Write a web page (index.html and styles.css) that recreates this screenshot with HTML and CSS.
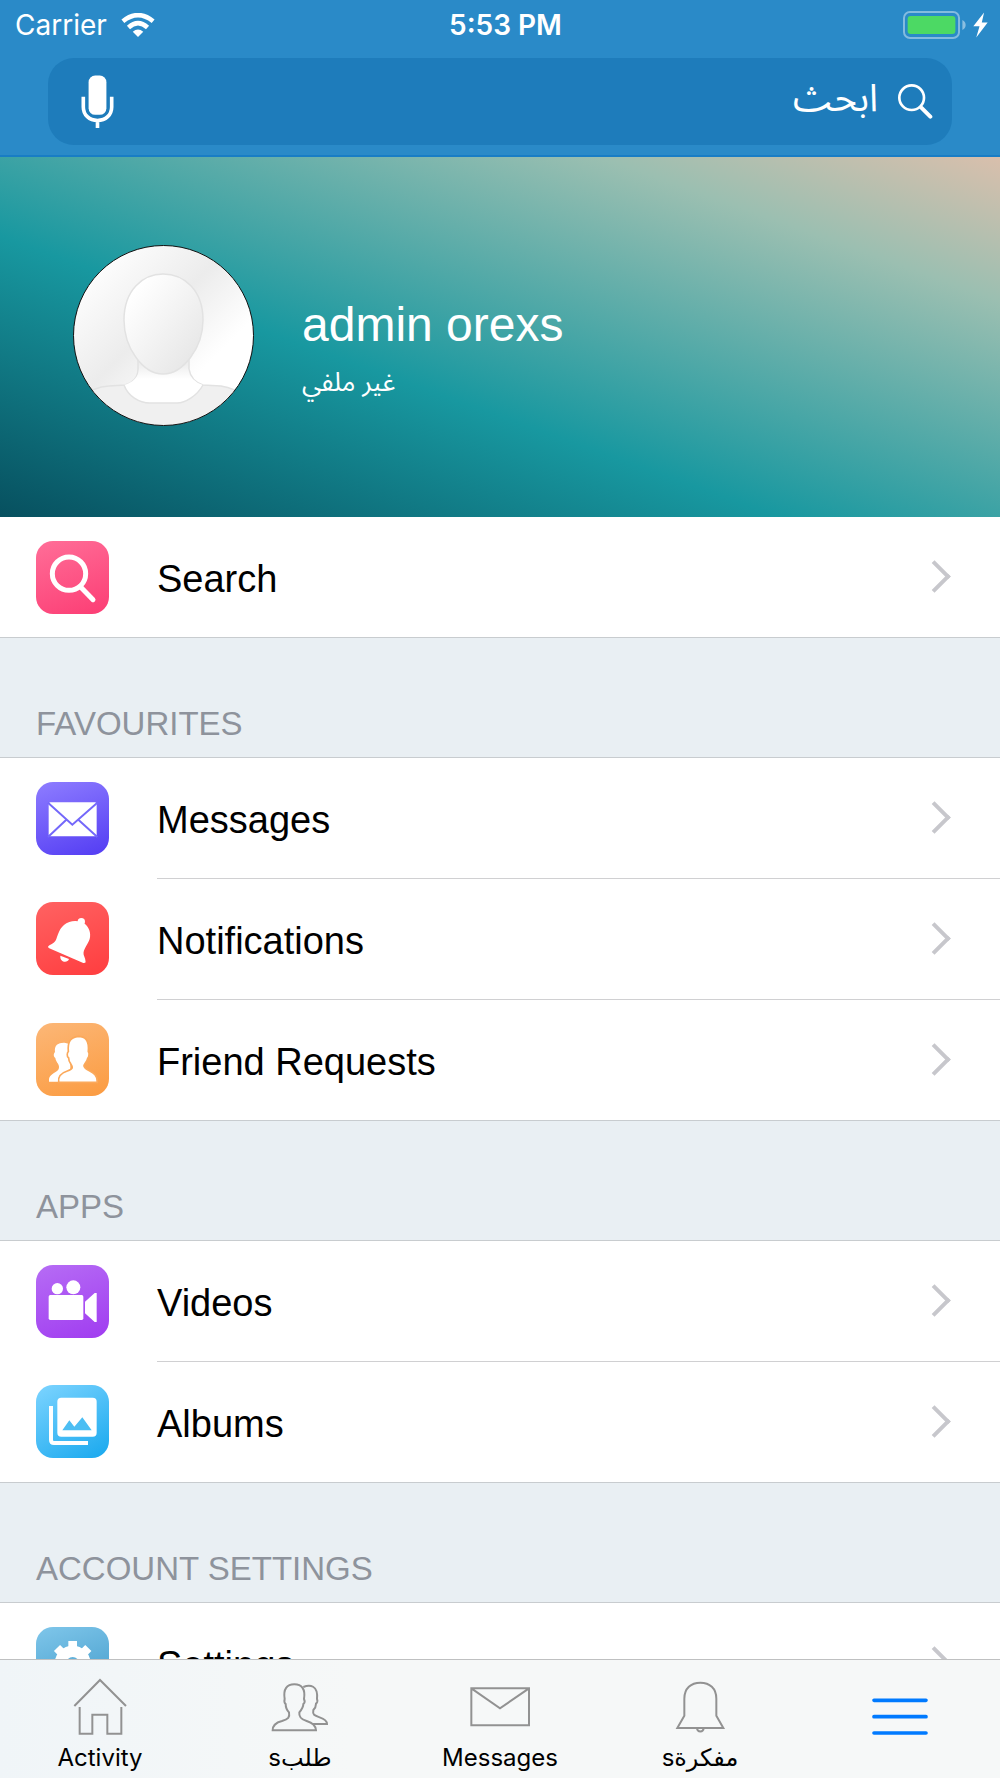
FILE: index.html
```html
<!DOCTYPE html>
<html lang="en">
<head>
    <meta charset="UTF-8">
    <meta name="viewport" content="width=device-width, initial-scale=1.0">
    <title>Menu</title>
    <link rel="stylesheet" href="styles.css">
</head>
<body>
    <div class="app">
        <header class="header">
            <div class="status">
                <div class="carrier">
                    <span>Carrier</span>
                    <svg class="wifi" viewBox="0 0 102 73">
                        <path fill="#fff" d="M51 73L35 57Q51 43 67 57Z"/>
                        <path fill="none" stroke="#fff" stroke-width="14" d="M22 44Q51 18 80 44M5 25Q51 -12 97 25"/>
                    </svg>
                </div>
                <span class="time">5:53 PM</span>
                <div class="power">
                    <svg class="battery" viewBox="0 0 190 84">
                        <rect x="3" y="3" width="166" height="78" rx="18" fill="none" stroke="#fff" stroke-opacity=".42" stroke-width="6"/>
                        <rect x="14" y="15" width="144" height="54" rx="9" fill="#4cd964"/>
                        <path fill="#fff" fill-opacity=".45" d="M179 27Q189 32 189 42T179 57Z"/>
                    </svg>
                    <svg class="bolt" viewBox="0 0 46 78">
                        <path fill="#fff" d="M34 1L1 43H20L10 77L45 31H27Z"/>
                    </svg>
                </div>
            </div>
            <form class="search" dir="rtl">
                <svg class="search-icon" viewBox="0 0 105 105">
                    <circle cx="41" cy="41" r="37" fill="none" stroke="#fff" stroke-width="8"/>
                    <path fill="none" stroke="#fff" stroke-width="12" stroke-linecap="round" d="M70 71L97 98"/>
                </svg>
                <input class="search-input" type="text" placeholder="ابحث" aria-label="ابحث">
                <button class="mic" type="button" aria-label="Voice search">
                    <svg viewBox="0 0 100 162">
                        <rect x="23" y="1" width="54" height="119" rx="20" fill="#fff"/>
                        <path fill="none" stroke="#fff" stroke-width="11" d="M7 65V96C7 120 25 137 50 137S93 120 93 96V65M50 137V160"/>
                    </svg>
                </button>
            </form>
        </header>

        <main class="content">
            <a class="profile" href="#">
                <svg class="avatar" viewBox="0 0 181 181">
                    <defs>
                        <clipPath id="round"><circle cx="90.500" cy="90.500" r="90"/></clipPath>
                        <linearGradient id="back" x1="0" y1="0" x2="1" y2="1">
                            <stop offset="0.100" stop-color="#fff"/>
                            <stop offset="0.440" stop-color="#ececec"/>
                            <stop offset="0.700" stop-color="#fff"/>
                        </linearGradient>
                        <linearGradient id="face" x1="0" y1="0" x2="1" y2="1">
                            <stop offset="0.150" stop-color="#fff"/>
                            <stop offset="0.900" stop-color="#e6e6e6"/>
                        </linearGradient>
                        <linearGradient id="neck" x1="0" y1="0" x2="0" y2="1">
                            <stop offset="0.200" stop-color="#eee"/>
                            <stop offset="0.500" stop-color="#fff"/>
                        </linearGradient>
                    </defs>
                    <g clip-path="url(#round)" stroke="#e2e2e2" stroke-width="1.500">
                        <rect width="181" height="181" fill="url(#back)" stroke="none"/>
                        <path fill="#f0f0f0" d="M10 190V152Q20 142 36 141L52 140Q65 136 65 124V100H116V124Q118 136 130 140L148 141Q162 143 172 152V190Z"/>
                        <path fill="url(#neck)" stroke="none" d="M66 110H115V124Q117 136 130 140C124 151 112 158 104 158H77C66 158 55 151 51 140Q65 136 66 124Z"/>
                        <path fill="none" d="M51 140C55 151 66 158 77 158H104C112 158 124 151 130 140"/>
                        <path fill="url(#face)" d="M90 29C70 29 51 45 51 75C51 103 70 129 90 129S130 103 130 75C130 45 111 29 90 29Z"/>
                    </g>
                    <circle cx="90.500" cy="90.500" r="90" fill="none" stroke="#111"/>
                </svg>
                <div class="profile-text">
                    <h1 class="name">admin orexs</h1>
                    <p class="edit" dir="rtl">غير ملفي</p>
                </div>
            </a>

            <nav class="menu">
                <a class="row" href="#">
                    <svg class="icon pink" viewBox="0 0 219 219">
                        <circle cx="99" cy="98" r="50" fill="none" stroke="#fff" stroke-width="15"/>
                        <path fill="none" stroke="#fff" stroke-width="15" stroke-linecap="round" d="M134 138L171 176"/>
                    </svg>
                    <span class="label">Search</span>
                </a>

                <h2 class="section">FAVOURITES</h2>
                <a class="row" href="#">
                    <svg class="icon violet" viewBox="0 0 219 219">
                        <rect x="38" y="61" width="144" height="102" rx="5" fill="#fff"/>
                        <path fill="none" stroke="#7468fa" stroke-width="6" d="M36 62L109 128L184 62M36 165L91 113M184 165L127 113"/>
                    </svg>
                    <span class="label">Messages</span>
                </a>
                <a class="row" href="#">
                    <svg class="icon red" viewBox="0 0 219 219">
                        <circle cx="136" cy="59" r="11" fill="#fff"/>
                        <path fill="#fff" d="M36 134C42 126 55 126 61 111C68 91 74 69 100 60Q112 56 127 58L147 66C158 75 166 92 161 111C156 127 140 143 143 158Q149 172 149 181Q145 185 140 182L38 138ZM73 161L99 171C95 184 71 182 73 161Z"/>
                    </svg>
                    <span class="label">Notifications</span>
                </a>
                <a class="row" href="#">
                    <svg class="icon orange" viewBox="0 0 219 219">
                        <path fill="#fff" d="M39 176V168C41 153 64 148 68 138C73 125 60 119 58 105C51 100 53 90 57 88C54 65 67 60 83 59Q94 58 103 67V176Z"/>
                        <path fill="#fff" stroke="#fba95b" stroke-width="5" d="M68 178C65 160 75 150 94 144C113 138 111 132 104 122Q98 115 98 105C91 100 94 88 97 86C94 55 105 42 127 40C146 40 160 49 157 86C161 90 159 102 155 106C153 117 143 123 144 129C148 147 186 142 184 178Z"/>
                    </svg>
                    <span class="label">Friend Requests</span>
                </a>

                <h2 class="section">APPS</h2>
                <a class="row" href="#">
                    <svg class="icon purple" viewBox="0 0 219 219">
                        <g fill="#fff">
                            <circle cx="64" cy="71" r="17"/>
                            <circle cx="112" cy="67" r="21"/>
                            <rect x="38" y="90" width="104" height="75" rx="5"/>
                            <path d="M147 110L176 84H182V171H176L147 145Z"/>
                        </g>
                    </svg>
                    <span class="label">Videos</span>
                </a>
                <a class="row" href="#">
                    <svg class="icon sky" viewBox="0 0 219 219">
                        <rect x="64" y="38" width="118" height="117" rx="12" fill="#fff"/>
                        <path fill="#4cbef3" d="M79 136L100 106L115 125L139 97L167 136Z"/>
                        <path fill="none" stroke="#fff" stroke-width="12" d="M45 63V165Q45 174 54 174H156"/>
                    </svg>
                    <span class="label">Albums</span>
                </a>

                <h2 class="section">ACCOUNT SETTINGS</h2>
                <a class="row" href="#">
                    <svg class="icon steel" viewBox="0 0 219 219">
                        <g fill="none" stroke="#fff">
                            <circle cx="110" cy="110" r="37" stroke-width="34"/>
                            <path stroke-width="26" d="M110 42V70M110 150V178M42 110H70M150 110H178M63 63L82 82M138 138L157 157M63 157L82 138M138 82L157 63"/>
                        </g>
                    </svg>
                    <span class="label">Settings</span>
                </a>
            </nav>
        </main>

        <nav class="tabs">
            <a class="tab" href="#">
                <svg viewBox="0 0 180 180"><path d="M13 87L90 9L168 87M29 90V170H67V113H112V170H154V90"/></svg>
                <span>Activity</span>
            </a>
            <a class="tab" href="#">
                <svg viewBox="0 0 180 180">
                    <path d="M8 160C8 144 20 136 36 132C55 126 60 121 57 106C50 99 47 92 47 81C41 76 43 70 44 66C39 35 51 22 73 22S107 35 102 66C105 72 104 78 100 81C100 92 94 99 88 106C86 121 94 127 110 132C127 137 137 144 138 160Z"/>
                    <path d="M100 30C119 22 145 24 141 66C144 72 141 78 138 80Q138 91 130 99C127 113 133 116 149 121Q171 128 171 141H128"/>
                </svg>
                <span dir="ltr">s<bdi>طلب</bdi></span>
            </a>
            <a class="tab" href="#">
                <svg viewBox="0 0 180 180"><path d="M4 34H177V145H4ZL90 94L177 34"/></svg>
                <span>Messages</span>
            </a>
            <a class="tab" href="#">
                <svg viewBox="0 0 180 180"><path d="M22 153L43 116V65C43 34 63 17 91 17S139 34 139 65V116L160 153ZM81 153C82 167 100 167 101 153"/></svg>
                <span dir="ltr">s<bdi>مفكرة</bdi></span>
            </a>
            <a class="tab active" href="#" aria-label="Menu">
                <svg viewBox="0 0 180 180"><path d="M12 70H168M12 119H168M12 168H168"/></svg>
            </a>
        </nav>
    </div>
</body>
</html>
```
FILE: styles.css
```css
* {
    box-sizing: border-box;
}
body {
    margin: 0;
    font-family: "Liberation Sans", Arial, sans-serif;
    color: #000;
    background-color: #fff;
}
svg {
    display: block;
    flex-shrink: 0;
}
a {
    color: inherit;
    text-decoration: none;
}
.app {
    display: flex;
    flex-direction: column;
    height: 100vh;
}

/* header */
.header {
    background-color: #2a8ac8;
    border-bottom: 2px solid #187dc5;
    padding-bottom: 10px;
}
.status {
    display: grid;
    grid-template-columns: 1fr auto 1fr;
    align-items: center;
    height: 50px;
    padding: 0 4px 0 15px;
    color: #fff;
    font-family: Inter, Roboto, sans-serif;
    font-size: 28px;
}
.carrier {
    display: flex;
    align-items: center;
    gap: 14px;
}
.wifi {
    width: 34px;
    height: 24px;
}
.time {
    font-weight: 600;
}
.power {
    display: flex;
    justify-content: flex-end;
    align-items: center;
    gap: 7px;
    padding-right: 8px;
}
.battery {
    width: 63px;
    height: 28px;
}
.bolt {
    width: 15px;
    height: 26px;
}
.search {
    display: flex;
    align-items: center;
    gap: 20px;
    height: 87px;
    margin: 8px 48px 0;
    padding: 0 19px 0 33px;
    border-radius: 26px;
    background-color: #1e7cbb;
}
.search-icon {
    width: 35px;
    height: 35px;
}
.search-input {
    flex: 1;
    min-width: 0;
    padding: 0 0 6px;
    border: 0;
    outline: 0;
    background: none;
    color: #fff;
    font-family: "Noto Sans Arabic", "DejaVu Sans", sans-serif;
    font-size: 38px;
}
.search-input::placeholder {
    color: #fff;
    opacity: 1;
}
.mic {
    padding: 0;
    border: 0;
    background: none;
}
.mic svg {
    width: 33px;
    height: 54px;
}

/* profile */
.content {
    flex: 1;
    min-height: 0;
    overflow-y: auto;
    scrollbar-width: none;
}
.profile {
    display: flex;
    align-items: center;
    gap: 48px;
    padding: 88px 73px 91px;
    color: #fff;
    background: linear-gradient(to top right, #07505f 0%, #1898a0 39%, #9bbfb1 80%, #d9bfac 100%);
}
.avatar {
    width: 181px;
    height: 181px;
}
.profile-text {
    padding-top: 26px;
}
.name {
    margin: 0;
    font-size: 48px;
    font-weight: normal;
    line-height: 56px;
}
.edit {
    margin: 12px 0 0;
    font-family: "Noto Sans Arabic", "DejaVu Sans", sans-serif;
    font-size: 26px;
    line-height: 36px;
    text-align: left;
}

/* list */
.row {
    display: flex;
    align-items: center;
    gap: 48px;
    height: 120px;
    padding-left: 36px;
}
.row + .row {
    height: 121px;
}
.icon {
    width: 73px;
    height: 73px;
    border-radius: 17px;
}
.pink { background: linear-gradient(160deg, #ff6e98, #fc3d74); }
.violet { background: linear-gradient(160deg, #8e7dff, #533cf3); }
.red { background: linear-gradient(160deg, #ff6262, #ff3d3f); }
.orange { background: linear-gradient(160deg, #fcb777, #fb9b40); }
.purple { background: linear-gradient(160deg, #b66cf5, #a03cf0); }
.sky { background: linear-gradient(150deg, #7dd4ff, #18a8ee); }
.steel { background: linear-gradient(160deg, #7fc6ea, #3e98c8); }
.label {
    flex: 1;
    display: flex;
    align-items: center;
    justify-content: space-between;
    height: 100%;
    padding: 4px 54px 0 0;
    font-size: 38px;
}
.row + .row .label {
    border-top: 1px solid #d0d0d2;
}
.label::after {
    content: "";
    box-sizing: border-box;
    width: 23px;
    height: 23px;
    margin-bottom: 6px;
    border: solid #c7c7cc;
    border-width: 4px 4px 0 0;
    transform: rotate(45deg);
}
.section {
    height: 121px;
    margin: 0;
    padding: 66px 36px 0;
    border: solid #c8cccf;
    border-width: 1px 0;
    background-color: #e9eff3;
    color: #8e939c;
    font-size: 33px;
    font-weight: normal;
    line-height: 40px;
}

/* tab bar */
.tabs {
    display: grid;
    grid-template-columns: repeat(5, 1fr);
    height: 119px;
    border-top: 1px solid #bfc0c1;
    background: linear-gradient(to right, #f0f5f8, #f6f8f8 35%);
}
.tab {
    display: flex;
    flex-direction: column;
    align-items: center;
    gap: 6px;
    padding-top: 17px;
    font-family: Inter, "DejaVu Sans", sans-serif;
    font-size: 24px;
    line-height: 30px;
}
.tab svg {
    width: 60px;
    height: 60px;
    fill: none;
    stroke: #929292;
    stroke-width: 6;
}
.tab.active svg {
    stroke: #007aff;
    stroke-width: 11;
    stroke-linecap: round;
}
```
